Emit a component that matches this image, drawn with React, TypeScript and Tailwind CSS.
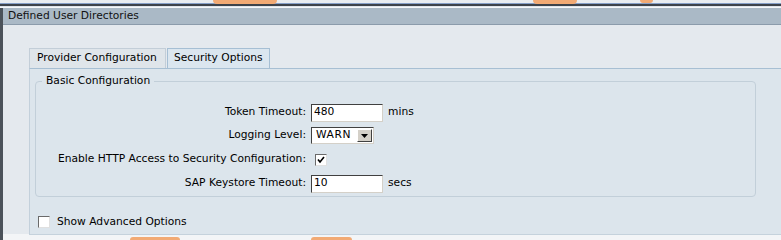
import React from "react";

const font = { fontFamily: '"DejaVu Sans", Verdana, sans-serif' };

function TextInput({ value }: { value: string }) {
  return (
    <div className="w-[72px] h-[18px] bg-white border border-t-[#404040] border-l-[#404040] border-r-[#d4d0c8] border-b-[#d4d0c8] flex items-center pl-[2px] text-[10.7px] text-black">
      {value}
    </div>
  );
}

function Check({ checked }: { checked?: boolean }) {
  return (
    <div className="w-[12px] h-[12px] bg-white border border-t-[#6a6a6a] border-l-[#6a6a6a] border-r-[#e0e0e0] border-b-[#e0e0e0] flex items-center justify-center">
      {checked && (
        <svg width="8" height="8" viewBox="0 0 8 8">
          <path d="M1 3.5 L3 6 L7 1" stroke="#000" strokeWidth="1.6" fill="none" />
        </svg>
      )}
    </div>
  );
}

export default function App() {
  const rows: [string, React.ReactNode, string | undefined, string][] = [
    ["Token Timeout:", <TextInput value="480" />, "mins", "h-[23px]"],
    [
      "Logging Level:",
      <div className="w-[63px] h-[17px] bg-white border border-t-[#404040] border-l-[#404040] border-r-[#d4d0c8] border-b-[#d4d0c8] flex items-center justify-between pl-[4px] pr-[1px] text-[10.7px] tracking-[0.6px]">
        <span>WARN</span>
        <div className="w-[15px] h-[13px] bg-[#d4d0c8] border border-t-[#ffffff] border-l-[#ffffff] border-r-[#404040] border-b-[#404040] flex items-center justify-center">
          <svg width="7" height="4" viewBox="0 0 7 4">
            <path d="M0 0 H7 L3.5 4 Z" fill="#000" />
          </svg>
        </div>
      </div>,
      undefined,
      "h-[23px]",
    ],
    ["Enable HTTP Access to Security Configuration:", <div className="pl-[4px]"><Check checked /></div>, undefined, "h-[25px]"],
    ["SAP Keystore Timeout:", <TextInput value="10" />, "secs", "h-[23px]"],
  ];

  return (
    <div className="relative w-[781px] h-[240px] overflow-hidden bg-[#f3f5f7] text-black" style={font}>
      {/* top chrome lines */}
      <div className="h-[3px] bg-[#e9edf1]" />
      <div className="h-[1px] bg-[#86a0c8]" />
      <div className="h-[2px] bg-[#3d434b]" />
      <div className="h-[1px] bg-[#dfe4ea]" />
      <div className="h-[1px] bg-[#f6f8fa]" />

      <div className="flex">
        <div className="w-[3px] h-[232px] bg-[#4b525a]" />
        <div className="flex-1">
          {/* header */}
          <div className="h-[17px] bg-[#aab9c6] border-b border-[#8b9bab] flex items-center pl-[5px] text-[10.7px] text-[#111]">
            Defined User Directories
          </div>
          {/* body */}
          <div className="bg-[#e4e9ee] pt-[23px] pl-[26px] h-[209px]">
            <div className="flex items-end h-[20px] text-[10.7px]">
              <div className="h-[20px] w-[137px] bg-[#dfe5ea] border border-b-0 border-[#c3ced8] flex items-center pl-[7px]">
                Provider Configuration
              </div>
              <div className="ml-[1px] h-[20px] w-[103px] bg-[#dbe6ef] border border-b-0 border-[#a6bfd4] flex items-center pl-[6px]">
                Security Options
              </div>
            </div>
            <div className="h-[167px] bg-[#dce5ec] border-t border-t-[#a7bfd3] border-l border-l-[#c3d0db] border-b border-b-[#c5d2dc] pl-[5px] pt-[5px]">
              <fieldset className="w-[721px] border border-[#c2cfd9] rounded-[4px] pb-[1px]">
                <legend className="ml-[6px] px-[4px] text-[10.7px] leading-[14px]">Basic Configuration</legend>
                <div className="pt-[13px] text-[10.7px]">
                  {rows.map(([label, ctrl, unit, h], i) => (
                    <div key={i} className={`flex items-center ${h}`}>
                      <div className="w-[271px] text-right pr-[1px]">{label}</div>
                      <div className="ml-[4px]">{ctrl}</div>
                      {unit && <div className="ml-[5px]">{unit}</div>}
                    </div>
                  ))}
                </div>
              </fieldset>
              <div className="flex items-center mt-[17px] ml-[3px] text-[10.7px]">
                <Check />
                <span className="ml-[7px]">Show Advanced Options</span>
              </div>
            </div>
          </div>
        </div>
      </div>

      {/* watermark fragments */}
      <div className="absolute left-[213px] top-0 w-[64px] h-[4px] bg-[#f2aa74] rounded-b-[20px]" />
      <div className="absolute left-[533px] top-0 w-[44px] h-[4px] bg-[#f2aa74] rounded-b-[14px]" />
      <div className="absolute left-[640px] top-0 w-[13px] h-[3px] bg-[#f2aa74] rounded-b-[6px]" />
      <div className="absolute left-[130px] top-[237px] w-[50px] h-[3px] bg-[#f2aa74] rounded-t-[3px]" />
      <div className="absolute left-[311px] top-[237px] w-[41px] h-[3px] bg-[#f2aa74] rounded-t-[3px]" />
    </div>
  );
}
